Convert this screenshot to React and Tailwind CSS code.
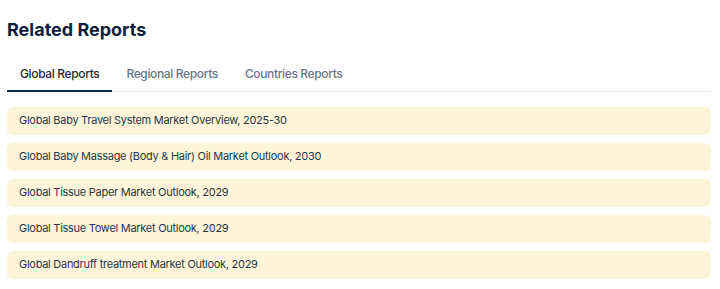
import React, { useState } from "react";

const tabs = ["Global Reports", "Regional Reports", "Countries Reports"];

const reports = [
  "Global Baby Travel System Market Overview, 2025-30",
  "Global Baby Massage (Body & Hair) Oil Market Outlook, 2030",
  "Global Tissue Paper Market Outlook, 2029",
  "Global Tissue Towel Market Outlook, 2029",
  "Global Dandruff treatment Market Outlook, 2029",
];

export default function App() {
  const [active, setActive] = useState(0);

  return (
    <div className="bg-white pl-[7px] pr-[9px] pt-4 font-['Inter',sans-serif]">
      <h2 className="text-lg leading-7 font-bold text-[#0c1f3b]">Related Reports</h2>
      <div className="mt-[14px] flex gap-px border-b border-[#e8e8e8]">
        {tabs.map((t, i) => (
          <button
            key={t}
            onClick={() => setActive(i)}
            className={
              i === active
                ? "-mb-px border-b-2 border-[#0f2a4a] px-[13px] pt-2 pb-2 text-[12px] leading-4 font-medium tracking-[-0.03em] text-[#1f2937]"
                : "-mb-px border-b-2 border-transparent px-[13px] pt-2 pb-2 text-[12px] leading-4 font-medium tracking-[-0.03em] text-[#6b7588]"
            }
          >
            {t}
          </button>
        ))}
      </div>
      <div className="mt-[15px] flex flex-col gap-2">
        {reports.map((r) => (
          <div
            key={r}
            className="rounded-md bg-[#fef5d9] px-3 pt-1 pb-1.5 text-[11px] leading-[18px] tracking-[-0.025em] text-[#283548]"
          >
            {r}
          </div>
        ))}
      </div>
    </div>
  );
}
